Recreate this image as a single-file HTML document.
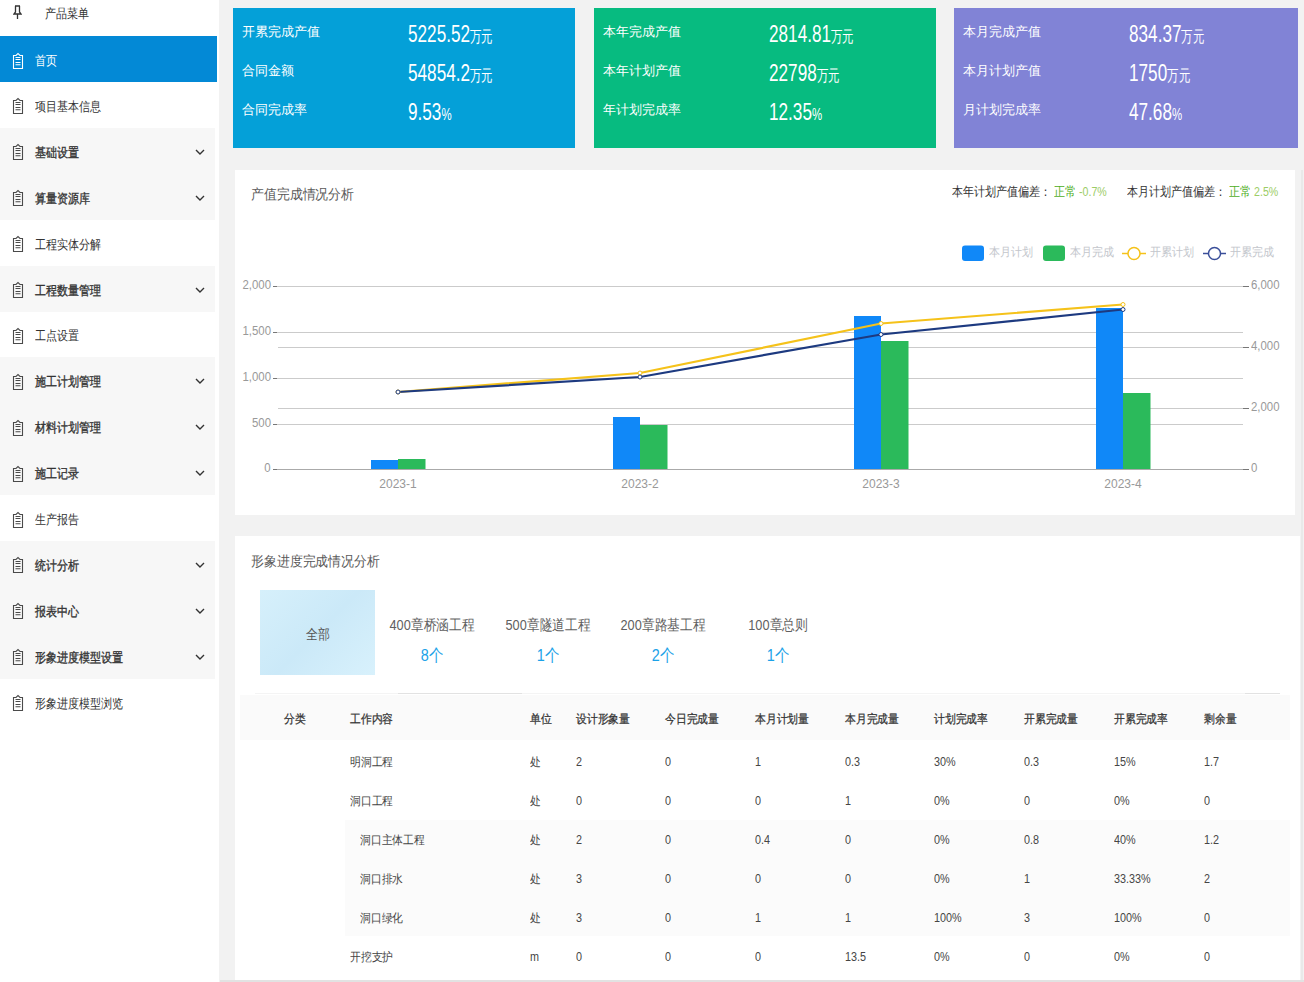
<!DOCTYPE html>
<html><head><meta charset="utf-8"><style>
*{margin:0;padding:0;box-sizing:border-box}
html,body{width:1304px;height:982px;overflow:hidden;background:#f2f2f2;font-family:"Liberation Sans",sans-serif;color:#333}
.abs{position:absolute;white-space:nowrap}
#side{position:absolute;left:0;top:0;width:219px;height:982px;background:#fff}
.mi{position:absolute;left:0;width:215px;height:46px;font-size:13px;line-height:46px;color:#333}
.mi.sub{background:#f7f7f7;-webkit-text-stroke:0.35px #333}
.mi.act{background:#0389d6;color:#fff;width:217px}
.mi .t{position:absolute;left:35px;top:2px;transform:scaleX(0.85);transform-origin:0 0}
.mi svg.ic{position:absolute;left:12px;top:15.5px}
.mi svg.ch{position:absolute;left:195px;top:21px}
.card{position:absolute;top:8px;width:342px;height:140px;color:#fff}
.card .l{position:absolute;left:9px;font-size:13px;line-height:16px;white-space:nowrap}
.card .v{position:absolute;left:175px;font-size:24px;line-height:24px;white-space:nowrap;transform-origin:0 0;transform:scaleX(0.715)}
.card .v small{font-size:16px}
.panel{position:absolute;background:#fff}
</style></head><body>
<div id="side">
<svg class="abs" style="left:13px;top:5px" width="9" height="14" viewBox="0 0 9 14"><path d="M2 1h5M2.5 1v6L1 9h7L6.5 7V1M4.5 9v5" fill="none" stroke="#333" stroke-width="1.3"/></svg>
<div class="abs" style="left:45px;top:6px;font-size:13px;line-height:16px;color:#333;font-weight:normal;transform-origin:0 0;transform:scaleX(0.85);">产品菜单</div>
<div class="mi act" style="top:36.0px"><svg class="ic" width="12" height="18" viewBox="0 0 12 18"><path d="M1.5 3.5h2.5l2-2 2 2h2.5v13h-9z M3.5 5.5h5 M3.5 7.5h5 M3.5 10.5h5 M3.5 12.7h5" fill="none" stroke="#fff" stroke-width="1.1"/></svg><span class="t">首页</span></div>
<div class="mi " style="top:81.9px"><svg class="ic" width="12" height="18" viewBox="0 0 12 18"><path d="M1.5 3.5h2.5l2-2 2 2h2.5v13h-9z M3.5 5.5h5 M3.5 7.5h5 M3.5 10.5h5 M3.5 12.7h5" fill="none" stroke="#4a4a4a" stroke-width="1.1"/></svg><span class="t">项目基本信息</span></div>
<div class="mi sub" style="top:127.8px"><svg class="ic" width="12" height="18" viewBox="0 0 12 18"><path d="M1.5 3.5h2.5l2-2 2 2h2.5v13h-9z M3.5 5.5h5 M3.5 7.5h5 M3.5 10.5h5 M3.5 12.7h5" fill="none" stroke="#4a4a4a" stroke-width="1.1"/></svg><span class="t">基础设置</span><svg class="ch" width="10" height="7" viewBox="0 0 10 7"><path d="M1 1l4 4 4-4" fill="none" stroke="#333" stroke-width="1.4"/></svg></div>
<div class="mi sub" style="top:173.7px"><svg class="ic" width="12" height="18" viewBox="0 0 12 18"><path d="M1.5 3.5h2.5l2-2 2 2h2.5v13h-9z M3.5 5.5h5 M3.5 7.5h5 M3.5 10.5h5 M3.5 12.7h5" fill="none" stroke="#4a4a4a" stroke-width="1.1"/></svg><span class="t">算量资源库</span><svg class="ch" width="10" height="7" viewBox="0 0 10 7"><path d="M1 1l4 4 4-4" fill="none" stroke="#333" stroke-width="1.4"/></svg></div>
<div class="mi " style="top:219.6px"><svg class="ic" width="12" height="18" viewBox="0 0 12 18"><path d="M1.5 3.5h2.5l2-2 2 2h2.5v13h-9z M3.5 5.5h5 M3.5 7.5h5 M3.5 10.5h5 M3.5 12.7h5" fill="none" stroke="#4a4a4a" stroke-width="1.1"/></svg><span class="t">工程实体分解</span></div>
<div class="mi sub" style="top:265.5px"><svg class="ic" width="12" height="18" viewBox="0 0 12 18"><path d="M1.5 3.5h2.5l2-2 2 2h2.5v13h-9z M3.5 5.5h5 M3.5 7.5h5 M3.5 10.5h5 M3.5 12.7h5" fill="none" stroke="#4a4a4a" stroke-width="1.1"/></svg><span class="t">工程数量管理</span><svg class="ch" width="10" height="7" viewBox="0 0 10 7"><path d="M1 1l4 4 4-4" fill="none" stroke="#333" stroke-width="1.4"/></svg></div>
<div class="mi " style="top:311.4px"><svg class="ic" width="12" height="18" viewBox="0 0 12 18"><path d="M1.5 3.5h2.5l2-2 2 2h2.5v13h-9z M3.5 5.5h5 M3.5 7.5h5 M3.5 10.5h5 M3.5 12.7h5" fill="none" stroke="#4a4a4a" stroke-width="1.1"/></svg><span class="t">工点设置</span></div>
<div class="mi sub" style="top:357.3px"><svg class="ic" width="12" height="18" viewBox="0 0 12 18"><path d="M1.5 3.5h2.5l2-2 2 2h2.5v13h-9z M3.5 5.5h5 M3.5 7.5h5 M3.5 10.5h5 M3.5 12.7h5" fill="none" stroke="#4a4a4a" stroke-width="1.1"/></svg><span class="t">施工计划管理</span><svg class="ch" width="10" height="7" viewBox="0 0 10 7"><path d="M1 1l4 4 4-4" fill="none" stroke="#333" stroke-width="1.4"/></svg></div>
<div class="mi sub" style="top:403.2px"><svg class="ic" width="12" height="18" viewBox="0 0 12 18"><path d="M1.5 3.5h2.5l2-2 2 2h2.5v13h-9z M3.5 5.5h5 M3.5 7.5h5 M3.5 10.5h5 M3.5 12.7h5" fill="none" stroke="#4a4a4a" stroke-width="1.1"/></svg><span class="t">材料计划管理</span><svg class="ch" width="10" height="7" viewBox="0 0 10 7"><path d="M1 1l4 4 4-4" fill="none" stroke="#333" stroke-width="1.4"/></svg></div>
<div class="mi sub" style="top:449.1px"><svg class="ic" width="12" height="18" viewBox="0 0 12 18"><path d="M1.5 3.5h2.5l2-2 2 2h2.5v13h-9z M3.5 5.5h5 M3.5 7.5h5 M3.5 10.5h5 M3.5 12.7h5" fill="none" stroke="#4a4a4a" stroke-width="1.1"/></svg><span class="t">施工记录</span><svg class="ch" width="10" height="7" viewBox="0 0 10 7"><path d="M1 1l4 4 4-4" fill="none" stroke="#333" stroke-width="1.4"/></svg></div>
<div class="mi " style="top:495.0px"><svg class="ic" width="12" height="18" viewBox="0 0 12 18"><path d="M1.5 3.5h2.5l2-2 2 2h2.5v13h-9z M3.5 5.5h5 M3.5 7.5h5 M3.5 10.5h5 M3.5 12.7h5" fill="none" stroke="#4a4a4a" stroke-width="1.1"/></svg><span class="t">生产报告</span></div>
<div class="mi sub" style="top:540.9px"><svg class="ic" width="12" height="18" viewBox="0 0 12 18"><path d="M1.5 3.5h2.5l2-2 2 2h2.5v13h-9z M3.5 5.5h5 M3.5 7.5h5 M3.5 10.5h5 M3.5 12.7h5" fill="none" stroke="#4a4a4a" stroke-width="1.1"/></svg><span class="t">统计分析</span><svg class="ch" width="10" height="7" viewBox="0 0 10 7"><path d="M1 1l4 4 4-4" fill="none" stroke="#333" stroke-width="1.4"/></svg></div>
<div class="mi sub" style="top:586.8px"><svg class="ic" width="12" height="18" viewBox="0 0 12 18"><path d="M1.5 3.5h2.5l2-2 2 2h2.5v13h-9z M3.5 5.5h5 M3.5 7.5h5 M3.5 10.5h5 M3.5 12.7h5" fill="none" stroke="#4a4a4a" stroke-width="1.1"/></svg><span class="t">报表中心</span><svg class="ch" width="10" height="7" viewBox="0 0 10 7"><path d="M1 1l4 4 4-4" fill="none" stroke="#333" stroke-width="1.4"/></svg></div>
<div class="mi sub" style="top:632.7px"><svg class="ic" width="12" height="18" viewBox="0 0 12 18"><path d="M1.5 3.5h2.5l2-2 2 2h2.5v13h-9z M3.5 5.5h5 M3.5 7.5h5 M3.5 10.5h5 M3.5 12.7h5" fill="none" stroke="#4a4a4a" stroke-width="1.1"/></svg><span class="t">形象进度模型设置</span><svg class="ch" width="10" height="7" viewBox="0 0 10 7"><path d="M1 1l4 4 4-4" fill="none" stroke="#333" stroke-width="1.4"/></svg></div>
<div class="mi " style="top:678.6px"><svg class="ic" width="12" height="18" viewBox="0 0 12 18"><path d="M1.5 3.5h2.5l2-2 2 2h2.5v13h-9z M3.5 5.5h5 M3.5 7.5h5 M3.5 10.5h5 M3.5 12.7h5" fill="none" stroke="#4a4a4a" stroke-width="1.1"/></svg><span class="t">形象进度模型浏览</span></div>
</div>
<div class="card" style="left:233px;width:342px;background:#04a0d8">
<div class="l" style="top:16px">开累完成产值</div><div class="v" style="top:14px">5225.52<small>万元</small></div>
<div class="l" style="top:55px">合同金额</div><div class="v" style="top:53px">54854.2<small>万元</small></div>
<div class="l" style="top:94px">合同完成率</div><div class="v" style="top:92px">9.53<small>%</small></div>
</div>
<div class="card" style="left:594px;width:342px;background:#07bb80">
<div class="l" style="top:16px">本年完成产值</div><div class="v" style="top:14px">2814.81<small>万元</small></div>
<div class="l" style="top:55px">本年计划产值</div><div class="v" style="top:53px">22798<small>万元</small></div>
<div class="l" style="top:94px">年计划完成率</div><div class="v" style="top:92px">12.35<small>%</small></div>
</div>
<div class="card" style="left:954px;width:344px;background:#8183d6">
<div class="l" style="top:16px">本月完成产值</div><div class="v" style="top:14px">834.37<small>万元</small></div>
<div class="l" style="top:55px">本月计划产值</div><div class="v" style="top:53px">1750<small>万元</small></div>
<div class="l" style="top:94px">月计划完成率</div><div class="v" style="top:92px">47.68<small>%</small></div>
</div>
<div class="panel" style="left:235px;top:170px;width:1060px;height:345px"></div>
<div class="abs" style="left:251px;top:186px;font-size:14px;line-height:17px;color:#5a5a5a;font-weight:normal;transform-origin:0 0;transform:scaleX(0.92);">产值完成情况分析</div>
<div class="abs" style="left:952px;top:185px;font-size:12.5px;line-height:15.5px;color:#333;font-weight:normal;transform-origin:0 0;transform:scaleX(0.85);">本年计划产值偏差：</div>
<div class="abs" style="left:1054px;top:185px;font-size:12.5px;line-height:15.5px;color:#4fae1e;font-weight:normal;transform-origin:0 0;transform:scaleX(0.85);">正常 <span style="color:#9ccc65">-0.7%</span></div>
<div class="abs" style="left:1127px;top:185px;font-size:12.5px;line-height:15.5px;color:#333;font-weight:normal;transform-origin:0 0;transform:scaleX(0.85);">本月计划产值偏差：</div>
<div class="abs" style="left:1229px;top:185px;font-size:12.5px;line-height:15.5px;color:#4fae1e;font-weight:normal;transform-origin:0 0;transform:scaleX(0.85);">正常 <span style="color:#9ccc65">2.5%</span></div>
<svg class="abs" style="left:0;top:0" width="1304" height="982" viewBox="0 0 1304 982">
<line x1="277" y1="286.5" x2="1243" y2="286.5" stroke="#cbcbcb" stroke-width="1"/>
<line x1="273" y1="286.5" x2="277" y2="286.5" stroke="#777" stroke-width="1"/>
<line x1="277" y1="332.5" x2="1243" y2="332.5" stroke="#cbcbcb" stroke-width="1"/>
<line x1="273" y1="332.5" x2="277" y2="332.5" stroke="#777" stroke-width="1"/>
<line x1="277" y1="378.5" x2="1243" y2="378.5" stroke="#cbcbcb" stroke-width="1"/>
<line x1="273" y1="378.5" x2="277" y2="378.5" stroke="#777" stroke-width="1"/>
<line x1="277" y1="424.5" x2="1243" y2="424.5" stroke="#cbcbcb" stroke-width="1"/>
<line x1="273" y1="424.5" x2="277" y2="424.5" stroke="#777" stroke-width="1"/>
<line x1="277" y1="469.5" x2="1243" y2="469.5" stroke="#cbcbcb" stroke-width="1"/>
<line x1="273" y1="469.5" x2="277" y2="469.5" stroke="#777" stroke-width="1"/>
<line x1="278" y1="286.5" x2="1249" y2="286.5" stroke="#cbcbcb" stroke-width="1"/>
<line x1="1243" y1="286.5" x2="1249" y2="286.5" stroke="#777" stroke-width="1"/>
<line x1="278" y1="347.5" x2="1249" y2="347.5" stroke="#cbcbcb" stroke-width="1"/>
<line x1="1243" y1="347.5" x2="1249" y2="347.5" stroke="#777" stroke-width="1"/>
<line x1="278" y1="408.5" x2="1249" y2="408.5" stroke="#cbcbcb" stroke-width="1"/>
<line x1="1243" y1="408.5" x2="1249" y2="408.5" stroke="#777" stroke-width="1"/>
<line x1="278" y1="469.5" x2="1249" y2="469.5" stroke="#cbcbcb" stroke-width="1"/>
<line x1="1243" y1="469.5" x2="1249" y2="469.5" stroke="#777" stroke-width="1"/>
<line x1="277" y1="469.5" x2="1243" y2="469.5" stroke="#aaa" stroke-width="1"/>
<rect x="371" y="460" width="27" height="9" fill="#1088f8"/>
<rect x="398" y="459" width="27.5" height="10" fill="#2bba5b"/>
<rect x="613" y="417" width="27" height="52" fill="#1088f8"/>
<rect x="640" y="425" width="27.5" height="44" fill="#2bba5b"/>
<rect x="854" y="316" width="27" height="153" fill="#1088f8"/>
<rect x="881" y="341" width="27.5" height="128" fill="#2bba5b"/>
<rect x="1096" y="308" width="27" height="161" fill="#1088f8"/>
<rect x="1123" y="393" width="27.5" height="76" fill="#2bba5b"/>
<polyline fill="none" stroke="#f5c21a" stroke-width="2.2" points="398,392 640,373 881,323.5 1123,304.5"/>
<polyline fill="none" stroke="#1d3a80" stroke-width="2.2" points="398,392 640,377 881,334.5 1123,309.5"/>
<circle cx="398" cy="392" r="2" fill="#fff" stroke="#f5c21a" stroke-width="1"/>
<circle cx="640" cy="373" r="2" fill="#fff" stroke="#f5c21a" stroke-width="1"/>
<circle cx="881" cy="323.5" r="2" fill="#fff" stroke="#f5c21a" stroke-width="1"/>
<circle cx="1123" cy="304.5" r="2" fill="#fff" stroke="#f5c21a" stroke-width="1"/>
<circle cx="398" cy="392" r="2" fill="#fff" stroke="#1d3a80" stroke-width="1"/>
<circle cx="640" cy="377" r="2" fill="#fff" stroke="#1d3a80" stroke-width="1"/>
<circle cx="881" cy="334.5" r="2" fill="#fff" stroke="#1d3a80" stroke-width="1"/>
<circle cx="1123" cy="309.5" r="2" fill="#fff" stroke="#1d3a80" stroke-width="1"/>
<rect x="962" y="245.5" width="22" height="15.5" rx="3" fill="#1088f8"/>
<rect x="1043" y="245.5" width="22" height="15.5" rx="3" fill="#2bba5b"/>
<line x1="1122" y1="253.5" x2="1146" y2="253.5" stroke="#f5c21a" stroke-width="1.5"/>
<circle cx="1134" cy="253.5" r="6" fill="#fff" stroke="#f5c21a" stroke-width="1.5"/>
<line x1="1203" y1="253.5" x2="1226" y2="253.5" stroke="#3a4f9a" stroke-width="1.5"/>
<circle cx="1214.5" cy="253.5" r="6" fill="#fff" stroke="#3a4f9a" stroke-width="1.5"/>
</svg>
<div class="abs" style="left:989px;top:245px;font-size:12px;line-height:15px;color:#c3c6cc;font-weight:normal;transform-origin:0 0;transform:scaleX(0.92);">本月计划</div>
<div class="abs" style="left:1070px;top:245px;font-size:12px;line-height:15px;color:#c3c6cc;font-weight:normal;transform-origin:0 0;transform:scaleX(0.92);">本月完成</div>
<div class="abs" style="left:1150px;top:245px;font-size:12px;line-height:15px;color:#c3c6cc;font-weight:normal;transform-origin:0 0;transform:scaleX(0.92);">开累计划</div>
<div class="abs" style="left:1230px;top:245px;font-size:12px;line-height:15px;color:#c3c6cc;font-weight:normal;transform-origin:0 0;transform:scaleX(0.92);">开累完成</div>
<div class="abs" style="right:1033px;top:278px;font-size:12px;line-height:15px;color:#999;font-weight:normal;transform-origin:100% 0;transform:scaleX(0.95);">2,000</div>
<div class="abs" style="right:1033px;top:324px;font-size:12px;line-height:15px;color:#999;font-weight:normal;transform-origin:100% 0;transform:scaleX(0.95);">1,500</div>
<div class="abs" style="right:1033px;top:370px;font-size:12px;line-height:15px;color:#999;font-weight:normal;transform-origin:100% 0;transform:scaleX(0.95);">1,000</div>
<div class="abs" style="right:1033px;top:416px;font-size:12px;line-height:15px;color:#999;font-weight:normal;transform-origin:100% 0;transform:scaleX(0.95);">500</div>
<div class="abs" style="right:1033px;top:461px;font-size:12px;line-height:15px;color:#999;font-weight:normal;transform-origin:100% 0;transform:scaleX(0.95);">0</div>
<div class="abs" style="left:1251px;top:278px;font-size:12px;line-height:15px;color:#999;font-weight:normal;transform-origin:0 0;transform:scaleX(0.95);">6,000</div>
<div class="abs" style="left:1251px;top:339px;font-size:12px;line-height:15px;color:#999;font-weight:normal;transform-origin:0 0;transform:scaleX(0.95);">4,000</div>
<div class="abs" style="left:1251px;top:400px;font-size:12px;line-height:15px;color:#999;font-weight:normal;transform-origin:0 0;transform:scaleX(0.95);">2,000</div>
<div class="abs" style="left:1251px;top:461px;font-size:12px;line-height:15px;color:#999;font-weight:normal;transform-origin:0 0;transform:scaleX(0.95);">0</div>
<div class="abs" style="left:398px;transform:translateX(-50%) scaleX(1.0);top:477px;font-size:12px;line-height:15px;color:#999;font-weight:normal;transform-origin:50% 0;">2023-1</div>
<div class="abs" style="left:640px;transform:translateX(-50%) scaleX(1.0);top:477px;font-size:12px;line-height:15px;color:#999;font-weight:normal;transform-origin:50% 0;">2023-2</div>
<div class="abs" style="left:881px;transform:translateX(-50%) scaleX(1.0);top:477px;font-size:12px;line-height:15px;color:#999;font-weight:normal;transform-origin:50% 0;">2023-3</div>
<div class="abs" style="left:1123px;transform:translateX(-50%) scaleX(1.0);top:477px;font-size:12px;line-height:15px;color:#999;font-weight:normal;transform-origin:50% 0;">2023-4</div>
<div class="panel" style="left:235px;top:536px;width:1065px;height:444px"></div>
<div class="abs" style="left:251px;top:553px;font-size:14px;line-height:17px;color:#5a5a5a;font-weight:normal;transform-origin:0 0;transform:scaleX(0.92);">形象进度完成情况分析</div>
<div class="abs" style="left:260px;top:590px;width:115px;height:85px;background:linear-gradient(135deg,#d6f0fb,#cbe9f8 50%,#d8f1fc)"></div>
<div class="abs" style="left:317.5px;transform:translateX(-50%) scaleX(0.85);top:626px;font-size:14px;line-height:17px;color:#555;font-weight:normal;transform-origin:50% 0;">全部</div>
<div class="abs" style="left:432px;transform:translateX(-50%) scaleX(0.85);top:616px;font-size:15px;line-height:18px;color:#606060;font-weight:normal;transform-origin:50% 0;">400章桥涵工程</div>
<div class="abs" style="left:432px;transform:translateX(-50%) scaleX(0.85);top:646px;font-size:17px;line-height:20px;color:#1ba2e8;font-weight:normal;transform-origin:50% 0;">8个</div>
<div class="abs" style="left:548px;transform:translateX(-50%) scaleX(0.85);top:616px;font-size:15px;line-height:18px;color:#606060;font-weight:normal;transform-origin:50% 0;">500章隧道工程</div>
<div class="abs" style="left:548px;transform:translateX(-50%) scaleX(0.85);top:646px;font-size:17px;line-height:20px;color:#1ba2e8;font-weight:normal;transform-origin:50% 0;">1个</div>
<div class="abs" style="left:663px;transform:translateX(-50%) scaleX(0.85);top:616px;font-size:15px;line-height:18px;color:#606060;font-weight:normal;transform-origin:50% 0;">200章路基工程</div>
<div class="abs" style="left:663px;transform:translateX(-50%) scaleX(0.85);top:646px;font-size:17px;line-height:20px;color:#1ba2e8;font-weight:normal;transform-origin:50% 0;">2个</div>
<div class="abs" style="left:778px;transform:translateX(-50%) scaleX(0.85);top:616px;font-size:15px;line-height:18px;color:#606060;font-weight:normal;transform-origin:50% 0;">100章总则</div>
<div class="abs" style="left:778px;transform:translateX(-50%) scaleX(0.85);top:646px;font-size:17px;line-height:20px;color:#1ba2e8;font-weight:normal;transform-origin:50% 0;">1个</div>
<div class="abs" style="left:255px;top:693px;width:1025px;height:1px;background:#f4f4f4"></div>
<div class="abs" style="left:398px;top:693px;width:124px;height:1px;background:#e2e2e2"></div>
<div class="abs" style="left:1245px;top:693px;width:35px;height:1px;background:#e2e2e2"></div>
<div class="abs" style="left:240px;top:695px;width:1050px;height:45px;background:#fafafa"></div>
<div class="abs" style="left:345px;top:820px;width:945px;height:116px;background:#fbfbfb"></div>
<div class="abs" style="left:284px;top:712px;font-size:12px;line-height:15px;color:#333;font-weight:normal;transform-origin:0 0;transform:scaleX(0.9);-webkit-text-stroke:0.25px #333;">分类</div>
<div class="abs" style="left:350px;top:712px;font-size:12px;line-height:15px;color:#333;font-weight:normal;transform-origin:0 0;transform:scaleX(0.9);-webkit-text-stroke:0.25px #333;">工作内容</div>
<div class="abs" style="left:530px;top:712px;font-size:12px;line-height:15px;color:#333;font-weight:normal;transform-origin:0 0;transform:scaleX(0.9);-webkit-text-stroke:0.25px #333;">单位</div>
<div class="abs" style="left:576px;top:712px;font-size:12px;line-height:15px;color:#333;font-weight:normal;transform-origin:0 0;transform:scaleX(0.9);-webkit-text-stroke:0.25px #333;">设计形象量</div>
<div class="abs" style="left:665px;top:712px;font-size:12px;line-height:15px;color:#333;font-weight:normal;transform-origin:0 0;transform:scaleX(0.9);-webkit-text-stroke:0.25px #333;">今日完成量</div>
<div class="abs" style="left:755px;top:712px;font-size:12px;line-height:15px;color:#333;font-weight:normal;transform-origin:0 0;transform:scaleX(0.9);-webkit-text-stroke:0.25px #333;">本月计划量</div>
<div class="abs" style="left:845px;top:712px;font-size:12px;line-height:15px;color:#333;font-weight:normal;transform-origin:0 0;transform:scaleX(0.9);-webkit-text-stroke:0.25px #333;">本月完成量</div>
<div class="abs" style="left:934px;top:712px;font-size:12px;line-height:15px;color:#333;font-weight:normal;transform-origin:0 0;transform:scaleX(0.9);-webkit-text-stroke:0.25px #333;">计划完成率</div>
<div class="abs" style="left:1024px;top:712px;font-size:12px;line-height:15px;color:#333;font-weight:normal;transform-origin:0 0;transform:scaleX(0.9);-webkit-text-stroke:0.25px #333;">开累完成量</div>
<div class="abs" style="left:1114px;top:712px;font-size:12px;line-height:15px;color:#333;font-weight:normal;transform-origin:0 0;transform:scaleX(0.9);-webkit-text-stroke:0.25px #333;">开累完成率</div>
<div class="abs" style="left:1204px;top:712px;font-size:12px;line-height:15px;color:#333;font-weight:normal;transform-origin:0 0;transform:scaleX(0.9);-webkit-text-stroke:0.25px #333;">剩余量</div>
<div class="abs" style="left:350px;top:755px;font-size:12px;line-height:15px;color:#454545;font-weight:normal;transform-origin:0 0;transform:scaleX(0.9);">明洞工程</div>
<div class="abs" style="left:530px;top:755px;font-size:12px;line-height:15px;color:#454545;font-weight:normal;transform-origin:0 0;transform:scaleX(0.9);">处</div>
<div class="abs" style="left:576px;top:755px;font-size:12px;line-height:15px;color:#454545;font-weight:normal;transform-origin:0 0;transform:scaleX(0.9);">2</div>
<div class="abs" style="left:665px;top:755px;font-size:12px;line-height:15px;color:#454545;font-weight:normal;transform-origin:0 0;transform:scaleX(0.9);">0</div>
<div class="abs" style="left:755px;top:755px;font-size:12px;line-height:15px;color:#454545;font-weight:normal;transform-origin:0 0;transform:scaleX(0.9);">1</div>
<div class="abs" style="left:845px;top:755px;font-size:12px;line-height:15px;color:#454545;font-weight:normal;transform-origin:0 0;transform:scaleX(0.9);">0.3</div>
<div class="abs" style="left:934px;top:755px;font-size:12px;line-height:15px;color:#454545;font-weight:normal;transform-origin:0 0;transform:scaleX(0.9);">30%</div>
<div class="abs" style="left:1024px;top:755px;font-size:12px;line-height:15px;color:#454545;font-weight:normal;transform-origin:0 0;transform:scaleX(0.9);">0.3</div>
<div class="abs" style="left:1114px;top:755px;font-size:12px;line-height:15px;color:#454545;font-weight:normal;transform-origin:0 0;transform:scaleX(0.9);">15%</div>
<div class="abs" style="left:1204px;top:755px;font-size:12px;line-height:15px;color:#454545;font-weight:normal;transform-origin:0 0;transform:scaleX(0.9);">1.7</div>
<div class="abs" style="left:350px;top:794px;font-size:12px;line-height:15px;color:#454545;font-weight:normal;transform-origin:0 0;transform:scaleX(0.9);">洞口工程</div>
<div class="abs" style="left:530px;top:794px;font-size:12px;line-height:15px;color:#454545;font-weight:normal;transform-origin:0 0;transform:scaleX(0.9);">处</div>
<div class="abs" style="left:576px;top:794px;font-size:12px;line-height:15px;color:#454545;font-weight:normal;transform-origin:0 0;transform:scaleX(0.9);">0</div>
<div class="abs" style="left:665px;top:794px;font-size:12px;line-height:15px;color:#454545;font-weight:normal;transform-origin:0 0;transform:scaleX(0.9);">0</div>
<div class="abs" style="left:755px;top:794px;font-size:12px;line-height:15px;color:#454545;font-weight:normal;transform-origin:0 0;transform:scaleX(0.9);">0</div>
<div class="abs" style="left:845px;top:794px;font-size:12px;line-height:15px;color:#454545;font-weight:normal;transform-origin:0 0;transform:scaleX(0.9);">1</div>
<div class="abs" style="left:934px;top:794px;font-size:12px;line-height:15px;color:#454545;font-weight:normal;transform-origin:0 0;transform:scaleX(0.9);">0%</div>
<div class="abs" style="left:1024px;top:794px;font-size:12px;line-height:15px;color:#454545;font-weight:normal;transform-origin:0 0;transform:scaleX(0.9);">0</div>
<div class="abs" style="left:1114px;top:794px;font-size:12px;line-height:15px;color:#454545;font-weight:normal;transform-origin:0 0;transform:scaleX(0.9);">0%</div>
<div class="abs" style="left:1204px;top:794px;font-size:12px;line-height:15px;color:#454545;font-weight:normal;transform-origin:0 0;transform:scaleX(0.9);">0</div>
<div class="abs" style="left:360px;top:833px;font-size:12px;line-height:15px;color:#454545;font-weight:normal;transform-origin:0 0;transform:scaleX(0.9);">洞口主体工程</div>
<div class="abs" style="left:530px;top:833px;font-size:12px;line-height:15px;color:#454545;font-weight:normal;transform-origin:0 0;transform:scaleX(0.9);">处</div>
<div class="abs" style="left:576px;top:833px;font-size:12px;line-height:15px;color:#454545;font-weight:normal;transform-origin:0 0;transform:scaleX(0.9);">2</div>
<div class="abs" style="left:665px;top:833px;font-size:12px;line-height:15px;color:#454545;font-weight:normal;transform-origin:0 0;transform:scaleX(0.9);">0</div>
<div class="abs" style="left:755px;top:833px;font-size:12px;line-height:15px;color:#454545;font-weight:normal;transform-origin:0 0;transform:scaleX(0.9);">0.4</div>
<div class="abs" style="left:845px;top:833px;font-size:12px;line-height:15px;color:#454545;font-weight:normal;transform-origin:0 0;transform:scaleX(0.9);">0</div>
<div class="abs" style="left:934px;top:833px;font-size:12px;line-height:15px;color:#454545;font-weight:normal;transform-origin:0 0;transform:scaleX(0.9);">0%</div>
<div class="abs" style="left:1024px;top:833px;font-size:12px;line-height:15px;color:#454545;font-weight:normal;transform-origin:0 0;transform:scaleX(0.9);">0.8</div>
<div class="abs" style="left:1114px;top:833px;font-size:12px;line-height:15px;color:#454545;font-weight:normal;transform-origin:0 0;transform:scaleX(0.9);">40%</div>
<div class="abs" style="left:1204px;top:833px;font-size:12px;line-height:15px;color:#454545;font-weight:normal;transform-origin:0 0;transform:scaleX(0.9);">1.2</div>
<div class="abs" style="left:360px;top:872px;font-size:12px;line-height:15px;color:#454545;font-weight:normal;transform-origin:0 0;transform:scaleX(0.9);">洞口排水</div>
<div class="abs" style="left:530px;top:872px;font-size:12px;line-height:15px;color:#454545;font-weight:normal;transform-origin:0 0;transform:scaleX(0.9);">处</div>
<div class="abs" style="left:576px;top:872px;font-size:12px;line-height:15px;color:#454545;font-weight:normal;transform-origin:0 0;transform:scaleX(0.9);">3</div>
<div class="abs" style="left:665px;top:872px;font-size:12px;line-height:15px;color:#454545;font-weight:normal;transform-origin:0 0;transform:scaleX(0.9);">0</div>
<div class="abs" style="left:755px;top:872px;font-size:12px;line-height:15px;color:#454545;font-weight:normal;transform-origin:0 0;transform:scaleX(0.9);">0</div>
<div class="abs" style="left:845px;top:872px;font-size:12px;line-height:15px;color:#454545;font-weight:normal;transform-origin:0 0;transform:scaleX(0.9);">0</div>
<div class="abs" style="left:934px;top:872px;font-size:12px;line-height:15px;color:#454545;font-weight:normal;transform-origin:0 0;transform:scaleX(0.9);">0%</div>
<div class="abs" style="left:1024px;top:872px;font-size:12px;line-height:15px;color:#454545;font-weight:normal;transform-origin:0 0;transform:scaleX(0.9);">1</div>
<div class="abs" style="left:1114px;top:872px;font-size:12px;line-height:15px;color:#454545;font-weight:normal;transform-origin:0 0;transform:scaleX(0.9);">33.33%</div>
<div class="abs" style="left:1204px;top:872px;font-size:12px;line-height:15px;color:#454545;font-weight:normal;transform-origin:0 0;transform:scaleX(0.9);">2</div>
<div class="abs" style="left:360px;top:911px;font-size:12px;line-height:15px;color:#454545;font-weight:normal;transform-origin:0 0;transform:scaleX(0.9);">洞口绿化</div>
<div class="abs" style="left:530px;top:911px;font-size:12px;line-height:15px;color:#454545;font-weight:normal;transform-origin:0 0;transform:scaleX(0.9);">处</div>
<div class="abs" style="left:576px;top:911px;font-size:12px;line-height:15px;color:#454545;font-weight:normal;transform-origin:0 0;transform:scaleX(0.9);">3</div>
<div class="abs" style="left:665px;top:911px;font-size:12px;line-height:15px;color:#454545;font-weight:normal;transform-origin:0 0;transform:scaleX(0.9);">0</div>
<div class="abs" style="left:755px;top:911px;font-size:12px;line-height:15px;color:#454545;font-weight:normal;transform-origin:0 0;transform:scaleX(0.9);">1</div>
<div class="abs" style="left:845px;top:911px;font-size:12px;line-height:15px;color:#454545;font-weight:normal;transform-origin:0 0;transform:scaleX(0.9);">1</div>
<div class="abs" style="left:934px;top:911px;font-size:12px;line-height:15px;color:#454545;font-weight:normal;transform-origin:0 0;transform:scaleX(0.9);">100%</div>
<div class="abs" style="left:1024px;top:911px;font-size:12px;line-height:15px;color:#454545;font-weight:normal;transform-origin:0 0;transform:scaleX(0.9);">3</div>
<div class="abs" style="left:1114px;top:911px;font-size:12px;line-height:15px;color:#454545;font-weight:normal;transform-origin:0 0;transform:scaleX(0.9);">100%</div>
<div class="abs" style="left:1204px;top:911px;font-size:12px;line-height:15px;color:#454545;font-weight:normal;transform-origin:0 0;transform:scaleX(0.9);">0</div>
<div class="abs" style="left:350px;top:950px;font-size:12px;line-height:15px;color:#454545;font-weight:normal;transform-origin:0 0;transform:scaleX(0.9);">开挖支护</div>
<div class="abs" style="left:530px;top:950px;font-size:12px;line-height:15px;color:#454545;font-weight:normal;transform-origin:0 0;transform:scaleX(0.9);">m</div>
<div class="abs" style="left:576px;top:950px;font-size:12px;line-height:15px;color:#454545;font-weight:normal;transform-origin:0 0;transform:scaleX(0.9);">0</div>
<div class="abs" style="left:665px;top:950px;font-size:12px;line-height:15px;color:#454545;font-weight:normal;transform-origin:0 0;transform:scaleX(0.9);">0</div>
<div class="abs" style="left:755px;top:950px;font-size:12px;line-height:15px;color:#454545;font-weight:normal;transform-origin:0 0;transform:scaleX(0.9);">0</div>
<div class="abs" style="left:845px;top:950px;font-size:12px;line-height:15px;color:#454545;font-weight:normal;transform-origin:0 0;transform:scaleX(0.9);">13.5</div>
<div class="abs" style="left:934px;top:950px;font-size:12px;line-height:15px;color:#454545;font-weight:normal;transform-origin:0 0;transform:scaleX(0.9);">0%</div>
<div class="abs" style="left:1024px;top:950px;font-size:12px;line-height:15px;color:#454545;font-weight:normal;transform-origin:0 0;transform:scaleX(0.9);">0</div>
<div class="abs" style="left:1114px;top:950px;font-size:12px;line-height:15px;color:#454545;font-weight:normal;transform-origin:0 0;transform:scaleX(0.9);">0%</div>
<div class="abs" style="left:1204px;top:950px;font-size:12px;line-height:15px;color:#454545;font-weight:normal;transform-origin:0 0;transform:scaleX(0.9);">0</div>
<div class="abs" style="left:1301px;top:170px;width:2px;height:812px;background:#e9e9e9"></div>
<div class="abs" style="left:220px;top:980px;width:1084px;height:2px;background:#e2e2e2"></div>
</body></html>
